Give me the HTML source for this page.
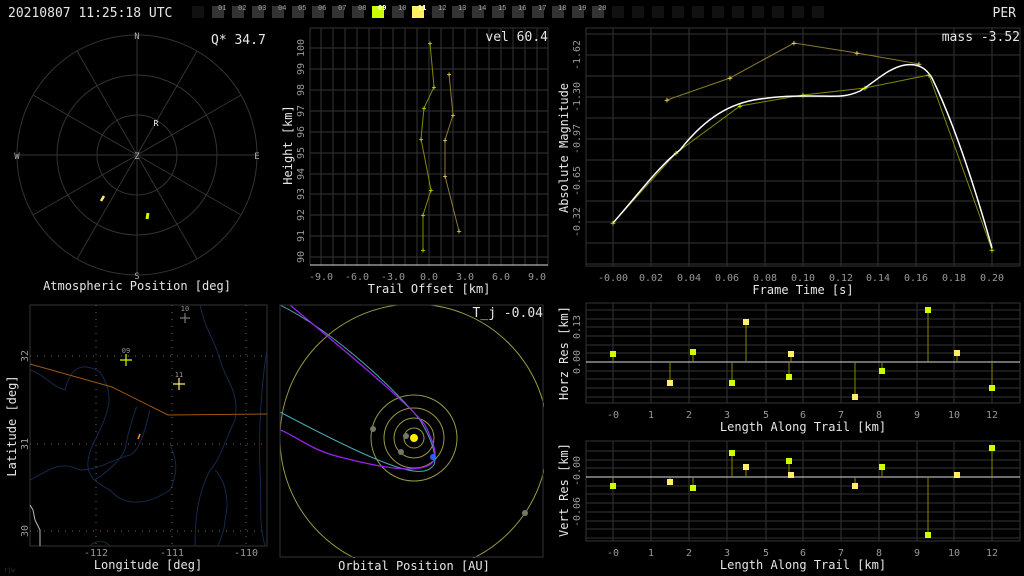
<!DOCTYPE html>
<html><head><meta charset="utf-8"><style>
html,body{margin:0;padding:0;background:#000;width:1024px;height:576px;overflow:hidden}
svg{display:block;font-family:"DejaVu Sans Mono","Liberation Mono",monospace}
.t{fill:#999;font-size:10px}
.c{fill:#e6e6e6;font-size:12px}
.g{stroke:#333;stroke-width:1;fill:none}
</style></head><body>
<svg width="1024" height="576" viewBox="0 0 1024 576">
<rect width="1024" height="576" fill="#000"/>
<text x="8" y="17" fill="#e6e6e6" font-size="13">20210807 11:25:18 UTC</text>
<text x="1016" y="17" fill="#e6e6e6" font-size="13" text-anchor="end">PER</text>
<g>
<rect x="192" y="6" width="12" height="12" fill="#111"/>
<g fill="#333">
<rect x="212" y="6" width="12" height="12"/><rect x="232" y="6" width="12" height="12"/><rect x="252" y="6" width="12" height="12"/><rect x="272" y="6" width="12" height="12"/><rect x="292" y="6" width="12" height="12"/><rect x="312" y="6" width="12" height="12"/><rect x="332" y="6" width="12" height="12"/><rect x="352" y="6" width="12" height="12"/><rect x="392" y="6" width="12" height="12"/><rect x="432" y="6" width="12" height="12"/><rect x="452" y="6" width="12" height="12"/><rect x="472" y="6" width="12" height="12"/><rect x="492" y="6" width="12" height="12"/><rect x="512" y="6" width="12" height="12"/><rect x="532" y="6" width="12" height="12"/><rect x="552" y="6" width="12" height="12"/><rect x="572" y="6" width="12" height="12"/><rect x="592" y="6" width="12" height="12"/>
</g>
<rect x="372" y="6" width="12" height="12" fill="#ccff00"/>
<rect x="412" y="6" width="12" height="12" fill="#ffee66"/>
<g fill="#111">
<rect x="612" y="6" width="12" height="12"/><rect x="632" y="6" width="12" height="12"/><rect x="652" y="6" width="12" height="12"/><rect x="672" y="6" width="12" height="12"/><rect x="692" y="6" width="12" height="12"/><rect x="712" y="6" width="12" height="12"/><rect x="732" y="6" width="12" height="12"/><rect x="752" y="6" width="12" height="12"/><rect x="772" y="6" width="12" height="12"/><rect x="792" y="6" width="12" height="12"/><rect x="812" y="6" width="12" height="12"/>
</g>
<g font-size="7" fill="#999">
<text x="218" y="10">01</text><text x="238" y="10">02</text><text x="258" y="10">03</text><text x="278" y="10">04</text><text x="298" y="10">05</text><text x="318" y="10">06</text><text x="338" y="10">07</text><text x="358" y="10">08</text><text x="378" y="10" fill="#fff" font-weight="bold">09</text><text x="398" y="10">10</text><text x="418" y="10" fill="#fff" font-weight="bold">11</text><text x="438" y="10">12</text><text x="458" y="10">13</text><text x="478" y="10">14</text><text x="498" y="10">15</text><text x="518" y="10">16</text><text x="538" y="10">17</text><text x="558" y="10">18</text><text x="578" y="10">19</text><text x="598" y="10">20</text>
</g>
</g>

<g stroke="#333" fill="none">
<circle cx="137" cy="155" r="40"/><circle cx="137" cy="155" r="80"/><circle cx="137" cy="155" r="120"/>
<line x1="137" y1="35" x2="137" y2="275"/><line x1="17" y1="155" x2="257" y2="155"/>
<line x1="77" y1="51" x2="197" y2="259"/><line x1="197" y1="51" x2="77" y2="259"/>
<line x1="33" y1="95" x2="241" y2="215"/><line x1="241" y1="95" x2="33" y2="215"/>
</g>
<g fill="#aaa" font-size="9" text-anchor="middle">
<text x="137" y="39">N</text><text x="137" y="279">S</text><text x="17" y="159">W</text><text x="257" y="159">E</text><text x="137" y="159">Z</text>
<text x="156" y="126" fill="#fff" font-size="8">R</text>
</g>
<line x1="101" y1="201" x2="104" y2="196" stroke="#ffee66" stroke-width="2.5"/>
<line x1="147" y1="219" x2="148" y2="213" stroke="#ccff00" stroke-width="3"/>
<text x="211" y="44" fill="#e6e6e6" font-size="13">Q* 34.7</text>
<text x="137" y="290" class="c" text-anchor="middle">Atmospheric Position [deg]</text>

<rect x="310" y="28" width="238" height="237" fill="#000" stroke="#333"/>
<g class="g">
<path d="M321 28V265M333 28V265M345 28V265M357 28V265M369 28V265M381 28V265M393 28V265M405 28V265M417 28V265M429 28V265M441 28V265M453 28V265M465 28V265M477 28V265M489 28V265M501 28V265M513 28V265M525 28V265M537 28V265"/>
<path d="M310 48H548M310 69H548M310 90H548M310 111H548M310 132H548M310 153H548M310 174H548M310 194H548M310 215H548M310 236H548M310 257H548"/>
</g>
<line x1="310" y1="265" x2="548" y2="265" stroke="#ddd"/>
<polyline points="430,43 434,87 424,108 421,139 431,190 423,215 423,250" fill="none" stroke="#888800" stroke-width="1"/>
<polyline points="449,74 453,115 445,140 445,176 459,231" fill="none" stroke="#8a7a30" stroke-width="1"/>
<g fill="#ccff00" font-size="8" text-anchor="middle">
<text x="430" y="46">+</text><text x="434" y="90">+</text><text x="424" y="111">+</text><text x="421" y="142">+</text><text x="431" y="193">+</text><text x="423" y="218">+</text><text x="423" y="253">+</text>
</g>
<g fill="#ffee66" font-size="8" text-anchor="middle">
<text x="449" y="77">+</text><text x="453" y="118">+</text><text x="445" y="143">+</text><text x="445" y="179">+</text><text x="459" y="234">+</text>
</g>
<g class="t" text-anchor="middle">
<text transform="translate(304,48) rotate(-90)">100</text><text transform="translate(304,69) rotate(-90)">99</text><text transform="translate(304,90) rotate(-90)">98</text><text transform="translate(304,111) rotate(-90)">97</text><text transform="translate(304,132) rotate(-90)">96</text><text transform="translate(304,153) rotate(-90)">95</text><text transform="translate(304,174) rotate(-90)">94</text><text transform="translate(304,194) rotate(-90)">93</text><text transform="translate(304,215) rotate(-90)">92</text><text transform="translate(304,236) rotate(-90)">91</text><text transform="translate(304,257) rotate(-90)">90</text>
<text x="321" y="280">-9.0</text><text x="357" y="280">-6.0</text><text x="393" y="280">-3.0</text><text x="429" y="280">0.0</text><text x="465" y="280">3.0</text><text x="501" y="280">6.0</text><text x="537" y="280">9.0</text>
</g>
<text class="c" text-anchor="middle" transform="translate(292,145) rotate(-90)">Height [km]</text>
<text x="429" y="293" class="c" text-anchor="middle">Trail Offset [km]</text>
<text x="548" y="41" fill="#e6e6e6" font-size="13" text-anchor="end">vel 60.4</text>

<rect x="586" y="28" width="434" height="238" fill="none" stroke="#333"/>
<g class="g">
<path d="M613 28V266M651 28V266M689 28V266M727 28V266M765 28V266M803 28V266M841 28V266M878 28V266M916 28V266M954 28V266M992 28V266"/>
<path d="M586 34H1020M586 55H1020M586 76H1020M586 97H1020M586 118H1020M586 139H1020M586 160H1020M586 181H1020M586 201H1020M586 222H1020M586 243H1020M586 264H1020"/>
</g>
<polyline points="667,100 730,78 794,43 857,53 919,64" fill="none" stroke="#8a7a30"/>
<polyline points="613,223 676,153 740,106 803,95 865,88 929,75 992,250" fill="none" stroke="#888800"/>
<path d="M613,223 C640,192 660,165 680,150 C705,118 730,103 760,99 C780,96 795,96 810,96 C835,96 845,98 860,91 C875,82 888,68 905,65 C918,63 926,68 932,78 C950,115 970,170 992,248" fill="none" stroke="#fff" stroke-width="1.5"/>
<g fill="#ffee66" font-size="9" text-anchor="middle">
<text x="667" y="103">+</text><text x="730" y="81">+</text><text x="794" y="46">+</text><text x="857" y="56">+</text><text x="919" y="67">+</text>
</g>
<g fill="#ccff00" font-size="9" text-anchor="middle">
<text x="613" y="226">+</text><text x="676" y="156">+</text><text x="740" y="109">+</text><text x="803" y="98">+</text><text x="865" y="91">+</text><text x="929" y="78">+</text><text x="992" y="253">+</text>
</g>
<g class="t" text-anchor="middle">
<text transform="translate(580,55) rotate(-90)">-1.62</text><text transform="translate(580,97) rotate(-90)">-1.30</text><text transform="translate(580,139) rotate(-90)">-0.97</text><text transform="translate(580,181) rotate(-90)">-0.65</text><text transform="translate(580,222) rotate(-90)">-0.32</text>
<text x="613" y="281">-0.00</text><text x="651" y="281">0.02</text><text x="689" y="281">0.04</text><text x="727" y="281">0.06</text><text x="765" y="281">0.08</text><text x="803" y="281">0.10</text><text x="841" y="281">0.12</text><text x="878" y="281">0.14</text><text x="916" y="281">0.16</text><text x="954" y="281">0.18</text><text x="992" y="281">0.20</text>
</g>
<text class="c" text-anchor="middle" transform="translate(568,148) rotate(-90)">Absolute Magnitude</text>
<text x="803" y="294" class="c" text-anchor="middle">Frame Time [s]</text>
<text x="1020" y="41" fill="#e6e6e6" font-size="13" text-anchor="end">mass -3.52</text>

<rect x="30" y="305" width="237" height="241" fill="none" stroke="#333"/>
<g stroke="#666" stroke-dasharray="1,6" fill="none">
<path d="M96 305V546M172 305V546M246 305V546M30 356H267M30 444H267M30 531H267"/>
</g>
<g stroke="#15284a" fill="none" stroke-width="1">
<path d="M30 370 C45 375 50 385 65 390 C70 370 80 360 100 372 C115 395 110 410 95 440 C80 470 90 480 110 490 C120 502 140 510 170 490 C180 470 175 455 170 445"/>
<path d="M30 480 C50 470 60 460 80 470 C100 470 110 460 130 455 C140 450 145 430 150 410"/>
<path d="M95 480 C110 470 120 460 125 450 C130 420 140 400 135 410"/>
<path d="M200 305 C205 330 215 340 220 360 C225 380 240 390 235 420 C225 440 220 460 210 470 C200 490 195 510 195 546"/>
<path d="M90 546 C95 540 105 540 110 546"/>
<path d="M267 350 C262 380 258 430 260 470 C262 500 258 520 265 546"/>
<path d="M215 470 C225 480 230 500 225 520 C225 530 220 540 218 546"/>
</g>
<path d="M30 364 L112 387 L168 415 L267 414" fill="none" stroke="#a0580c"/>
<path d="M30 505 L33 510 L35 520 L40 530 L40 546" fill="none" stroke="#bbb"/>
<path d="M138 439 L140 434" stroke="#ff8a30" stroke-width="1.5"/>
<g stroke-width="1.2">
<path d="M120 360h12M126 354v12" stroke="#ccff00"/>
<path d="M173 384h12M179 378v12" stroke="#ffee66"/>
<path d="M180 318h10M185 313v10" stroke="#777"/>
</g>
<g font-size="7" fill="#999" text-anchor="middle">
<text x="126" y="353">09</text><text x="179" y="377">11</text><text x="185" y="311">10</text>
</g>
<g class="t" text-anchor="middle">
<text x="96" y="556">-112</text><text x="172" y="556">-111</text><text x="246" y="556">-110</text>
<text transform="translate(28,356) rotate(-90)">32</text><text transform="translate(28,444) rotate(-90)">31</text><text transform="translate(28,531) rotate(-90)">30</text>
</g>
<text class="c" text-anchor="middle" transform="translate(16,426) rotate(-90)">Latitude [deg]</text>
<text x="148" y="569" class="c" text-anchor="middle">Longitude [deg]</text>
<text x="4" y="572" fill="#333" font-size="6">rjw</text>

<svg x="280" y="305" width="264" height="253" overflow="hidden">
<rect width="264" height="253" fill="#000"/>
<g fill="none" stroke="#999944" stroke-width="1">
<circle cx="134" cy="133" r="10"/><circle cx="134" cy="133" r="20"/><circle cx="134" cy="133" r="30"/><circle cx="134" cy="133" r="43"/><circle cx="134" cy="133" r="134"/>
</g>
<path d="M0 0 C60 30 120 90 140 115 C155 140 158 158 152 162 C140 175 100 160 0 107" fill="none" stroke="#4aa8b0"/>
<path d="M10 0 C70 50 130 100 145 120 C155 140 158 152 152 158 C140 168 110 165 60 152 C30 145 15 130 0 125" fill="none" stroke="#9922ee" stroke-width="1.3"/>
<circle cx="134" cy="133" r="4" fill="#ffee00"/>
<circle cx="93" cy="124" r="3" fill="#777766"/><circle cx="126" cy="131" r="3" fill="#777766"/><circle cx="121" cy="147" r="3" fill="#777766"/><circle cx="245" cy="208" r="3" fill="#777766"/>
<circle cx="153" cy="152" r="3" fill="#2266ff"/>
</svg>
<rect x="280" y="305" width="263" height="252" fill="none" stroke="#333"/>
<text x="543" y="317" fill="#e6e6e6" font-size="13" text-anchor="end">T_j -0.04</text>
<text x="414" y="570" class="c" text-anchor="middle">Orbital Position [AU]</text>

<rect x="586" y="303" width="434" height="100" fill="none" stroke="#333"/>
<g class="g">
<path d="M613 303V403M651 303V403M689 303V403M727 303V403M766 303V403M803 303V403M841 303V403M879 303V403M917 303V403M954 303V403M992 303V403"/>
<path d="M586 310H1020M586 319H1020M586 327H1020M586 336H1020M586 345H1020M586 353H1020M586 371H1020M586 379H1020M586 388H1020M586 397H1020"/>
</g>
<line x1="586" y1="362" x2="1020" y2="362" stroke="#ddd"/>
<g stroke="#888800">
<path d="M613 362V354M670 362V383M693 362V352M732 362V383M746 362V322M789 362V377M791 362V354M855 362V397M882 362V371M928 362V310M957 362V353M992 362V388"/>
</g>
<g fill="#ccff00"><rect x="610" y="351" width="6" height="6"/><rect x="690" y="349" width="6" height="6"/><rect x="729" y="380" width="6" height="6"/><rect x="786" y="374" width="6" height="6"/><rect x="879" y="368" width="6" height="6"/><rect x="925" y="307" width="6" height="6"/><rect x="989" y="385" width="6" height="6"/></g>
<g fill="#ffee66"><rect x="667" y="380" width="6" height="6"/><rect x="743" y="319" width="6" height="6"/><rect x="788" y="351" width="6" height="6"/><rect x="852" y="394" width="6" height="6"/><rect x="954" y="350" width="6" height="6"/></g>
<g class="t" text-anchor="middle">
<text x="613" y="418">-0</text><text x="651" y="418">1</text><text x="689" y="418">2</text><text x="727" y="418">3</text><text x="766" y="418">5</text><text x="803" y="418">6</text><text x="841" y="418">7</text><text x="879" y="418">8</text><text x="917" y="418">9</text><text x="954" y="418">10</text><text x="992" y="418">12</text>
<text transform="translate(580,327) rotate(-90)">0.13</text><text transform="translate(580,362) rotate(-90)">0.00</text>
</g>
<text class="c" text-anchor="middle" transform="translate(568,353) rotate(-90)">Horz Res [km]</text>
<text x="803" y="431" class="c" text-anchor="middle">Length Along Trail [km]</text>

<rect x="586" y="441" width="434" height="100" fill="none" stroke="#333"/>
<g class="g">
<path d="M613 441V541M651 441V541M689 441V541M727 441V541M766 441V541M803 441V541M841 441V541M879 441V541M917 441V541M954 441V541M992 441V541"/>
<path d="M586 451H1020M586 460H1020M586 468H1020M586 486H1020M586 494H1020M586 503H1020M586 512H1020M586 521H1020M586 529H1020M586 538H1020"/>
</g>
<line x1="586" y1="477" x2="1020" y2="477" stroke="#ddd"/>
<g stroke="#888800">
<path d="M613 477V486M670 477V482M693 477V488M732 477V453M746 477V467M789 477V461M791 477V475M855 477V486M882 477V467M928 477V535M957 477V475M992 477V448"/>
</g>
<g fill="#ccff00"><rect x="610" y="483" width="6" height="6"/><rect x="690" y="485" width="6" height="6"/><rect x="729" y="450" width="6" height="6"/><rect x="786" y="458" width="6" height="6"/><rect x="879" y="464" width="6" height="6"/><rect x="925" y="532" width="6" height="6"/><rect x="989" y="445" width="6" height="6"/></g>
<g fill="#ffee66"><rect x="667" y="479" width="6" height="6"/><rect x="743" y="464" width="6" height="6"/><rect x="788" y="472" width="6" height="6"/><rect x="852" y="483" width="6" height="6"/><rect x="954" y="472" width="6" height="6"/></g>
<g class="t" text-anchor="middle">
<text x="613" y="556">-0</text><text x="651" y="556">1</text><text x="689" y="556">2</text><text x="727" y="556">3</text><text x="766" y="556">5</text><text x="803" y="556">6</text><text x="841" y="556">7</text><text x="879" y="556">8</text><text x="917" y="556">9</text><text x="954" y="556">10</text><text x="992" y="556">12</text>
<text transform="translate(580,471) rotate(-90)">-0.00</text><text transform="translate(580,512) rotate(-90)">-0.06</text>
</g>
<text class="c" text-anchor="middle" transform="translate(568,490) rotate(-90)">Vert Res [km]</text>
<text x="803" y="569" class="c" text-anchor="middle">Length Along Trail [km]</text>
</svg>
</body></html>
